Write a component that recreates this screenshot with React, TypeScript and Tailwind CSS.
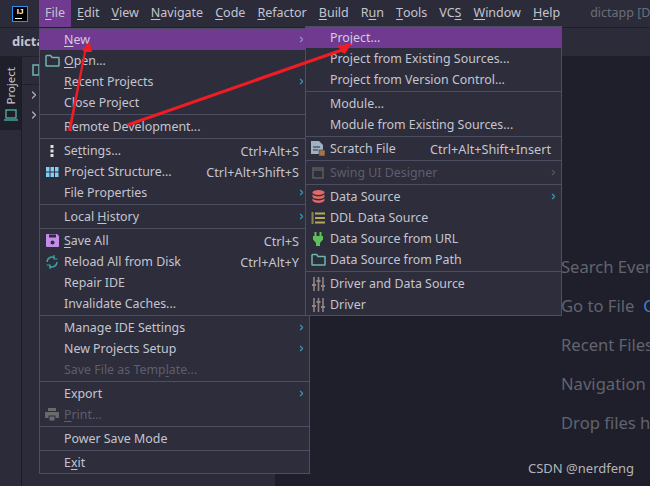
import type { ReactNode } from 'react';
import { ChevronRight } from 'lucide-react';

const font = "font-['Noto_Sans','Liberation_Sans',sans-serif]";

const topMenu: [string, string, string][] = [
  ['', 'F', 'ile'], ['', 'E', 'dit'], ['', 'V', 'iew'], ['', 'N', 'avigate'], ['', 'C', 'ode'], ['', 'R', 'efactor'],
  ['', 'B', 'uild'], ['R', 'u', 'n'], ['', 'T', 'ools'], ['VC', 'S', ''], ['', 'W', 'indow'], ['', 'H', 'elp'],
];

function FolderIcon({ color }: { color: string }) {
  return (
    <svg width="15" height="13" viewBox="0 0 15 13" fill="none" stroke={color} strokeWidth="1.5">
      <path d="M1 2.2V11.500c0 .3.2.5.5.5h12c.3 0 .5-.2.5-.5V4c0-.3-.2-.5-.5-.5H7L5.600 1.400H1.600c-.3 0-.6.3-.6.8z" />
    </svg>
  );
}

function Sliders() {
  return (
    <svg width="13" height="14" viewBox="0 0 13 14" fill="none" stroke="#8f8585" strokeWidth="1.6">
      <path d="M2 0v14M6.500 0v14M11 0v14" />
      <path d="M0 8h4M4.500 4h4M9 9h4" strokeWidth="2" />
    </svg>
  );
}

const icons: Record<string, ReactNode> = {
  folder: <FolderIcon color="#6fb5b0" />,
  folder2: <FolderIcon color="#6fb5b0" />,
  kebab: (
    <svg width="4" height="12" viewBox="0 0 4 12" fill="#e0e0e4">
      <rect x="0.500" y="0" width="3" height="3" />
      <rect x="0.500" y="4.500" width="3" height="3" />
      <rect x="0.500" y="9" width="3" height="3" />
    </svg>
  ),
  grid: (
    <svg width="13" height="10" viewBox="0 0 13 10" fill="#7fd0f5">
      <rect x="0" y="0" width="3.500" height="4.500" />
      <rect x="4.500" y="0" width="3.500" height="4.500" />
      <rect x="9" y="0" width="3.500" height="4.500" />
      <rect x="0" y="5.500" width="3.500" height="4.500" />
      <rect x="4.500" y="5.500" width="3.500" height="4.500" />
      <rect x="9" y="5.500" width="3.500" height="4.500" />
    </svg>
  ),
  save: (
    <svg width="13" height="13" viewBox="0 0 13 13">
      <path d="M0 1a1 1 0 0 1 1-1h10l2 2v10a1 1 0 0 1-1 1H1a1 1 0 0 1-1-1z" fill="#c58be8" />
      <rect x="3" y="0.500" width="7" height="3" fill="#2d2d3b" />
      <circle cx="6.500" cy="8.500" r="2" fill="#2d2d3b" />
    </svg>
  ),
  reload: (
    <svg width="12" height="14" viewBox="0 0 12 14" fill="none" stroke="#35a6a6" strokeWidth="1.6">
      <path d="M1 7a5 5 0 0 1 7.500-4.300M11 7a5 5 0 0 1-7.500 4.300" />
      <path d="M8 0v4h3.500M4 14v-4H.500" strokeWidth="1.2" />
    </svg>
  ),
  print: (
    <svg width="14" height="13" viewBox="0 0 14 13" fill="#6a6a6e">
      <rect x="3" y="0" width="8" height="3" />
      <rect x="0" y="4" width="14" height="6" rx="1" />
      <rect x="3.500" y="7.500" width="7" height="5" fill="#2d2d3b" />
      <rect x="4.500" y="8.500" width="5" height="4" />
    </svg>
  ),
  scratch: (
    <svg width="14" height="16" viewBox="0 0 14 16">
      <path d="M0 0h8l4 4v9H0z" fill="#9fb2c4" />
      <path d="M2 6h7M2 9h5" stroke="#2d2d3b" strokeWidth="1" />
      <rect x="8" y="9" width="6" height="6" fill="#a0744f" stroke="#2d2d3b" strokeWidth="0.500" />
    </svg>
  ),
  swing: (
    <svg width="12" height="12" viewBox="0 0 12 12" fill="none" stroke="#5c5c5e" strokeWidth="1.500">
      <rect x="1" y="1" width="10" height="10" />
      <path d="M1 3h10" />
    </svg>
  ),
  db: (
    <svg width="13" height="13" viewBox="0 0 13 13" fill="#e06a6a">
      <ellipse cx="6.500" cy="2.500" rx="6" ry="2.500" />
      <path d="M.500 4.200c1 1.400 3.500 2 6 2s5-.6 6-2v2.600c-.6 1.500-3.200 2.200-6 2.200s-5.400-.7-6-2.200z" />
      <path d="M.500 8.400c1 1.300 3.500 2 6 2s5-.7 6-2v2.100c-.6 1.600-3.200 2.500-6 2.500s-5.400-.9-6-2.500z" />
    </svg>
  ),
  ddl: (
    <svg width="14" height="12" viewBox="0 0 14 12" fill="#b5a95c">
      <rect x="4" y="0.500" width="10" height="2" />
      <rect x="4" y="5" width="10" height="2" />
      <rect x="4" y="9.500" width="10" height="2" />
      <rect x="0.500" y="0" width="2" height="12" fill="#8f8548" />
    </svg>
  ),
  plug: (
    <svg width="10" height="14" viewBox="0 0 10 14" fill="#5fbf5a">
      <rect x="1.500" y="0" width="2" height="4" />
      <rect x="6.500" y="0" width="2" height="4" />
      <path d="M0 4h10v3.500L7 11v3H3v-3L0 7.500z" />
    </svg>
  ),
  sliders: <Sliders />,
};

type Item = {
  label?: ReactNode;
  icon?: string;
  keys?: string;
  more?: boolean;
  off?: boolean;
  on?: boolean;
  sep?: boolean;
};

const u = (a: string, b: string, c: string) => (
  <>
    {a}
    <span className="underline underline-offset-2">{b}</span>
    {c}
  </>
);

const fileMenu: Item[] = [
  { label: u('', 'N', 'ew'), more: true, on: true },
  { label: u('', 'O', 'pen...'), icon: 'folder' },
  { label: u('', 'R', 'ecent Projects'), more: true },
  { label: 'Close Project' },
  { sep: true },
  { label: 'Remote Development...' },
  { sep: true },
  { label: u('Se', 't', 'tings...'), icon: 'kebab', keys: 'Ctrl+Alt+S' },
  { label: 'Project Structure...', icon: 'grid', keys: 'Ctrl+Alt+Shift+S' },
  { label: 'File Properties', more: true },
  { sep: true },
  { label: u('Local ', 'H', 'istory'), more: true },
  { sep: true },
  { label: u('', 'S', 'ave All'), icon: 'save', keys: 'Ctrl+S' },
  { label: 'Reload All from Disk', icon: 'reload', keys: 'Ctrl+Alt+Y' },
  { label: 'Repair IDE' },
  { label: 'Invalidate Caches...' },
  { sep: true },
  { label: 'Manage IDE Settings', more: true },
  { label: 'New Projects Setup', more: true },
  { label: u('Save File as Temp', 'l', 'ate...'), off: true },
  { sep: true },
  { label: 'Export', more: true },
  { label: u('', 'P', 'rint...'), icon: 'print', off: true },
  { sep: true },
  { label: 'Power Save Mode' },
  { sep: true },
  { label: u('E', 'x', 'it') },
];

const newMenu: Item[] = [
  { label: 'Project...', on: true },
  { label: 'Project from Existing Sources...' },
  { label: 'Project from Version Control...' },
  { sep: true },
  { label: 'Module...' },
  { label: 'Module from Existing Sources...' },
  { sep: true },
  { label: 'Scratch File', icon: 'scratch', keys: 'Ctrl+Alt+Shift+Insert' },
  { sep: true },
  { label: 'Swing UI Designer', icon: 'swing', off: true, more: true },
  { sep: true },
  { label: 'Data Source', icon: 'db', more: true },
  { label: 'DDL Data Source', icon: 'ddl' },
  { label: 'Data Source from URL', icon: 'plug' },
  { label: 'Data Source from Path', icon: 'folder2' },
  { sep: true },
  { label: 'Driver and Data Source', icon: 'sliders' },
  { label: 'Driver', icon: 'sliders' },
];

function Menu({ items, className }: { items: Item[]; className: string }) {
  return (
    <div className={`absolute border border-[#4e4e62] bg-[#2d2d3b] text-[12.4px] text-[#c4c5d0] ${className}`}>
      {items.map((item, i) =>
        item.sep ? (
          <div key={i} className="h-[3px] pt-px">
            <div className="h-px bg-[#4e4e62]" />
          </div>
        ) : (
          <div
            key={i}
            className={`flex h-[21px] items-center whitespace-nowrap ${item.on ? 'bg-[#6f3a90] text-[#d6cbe2]' : ''} ${item.off ? 'text-[#5e5e6e]' : ''}`}
          >
            <span className="flex w-[24px] shrink-0 items-center justify-center">{item.icon && icons[item.icon]}</span>
            <span className="pt-[2px]">{item.label}</span>
            {item.keys && <span className="ml-auto pl-4 pr-[10px] pt-[2px] text-[12.7px]">{item.keys}</span>}
            {item.more && (
              <ChevronRight
                size={9}
                strokeWidth={3}
                className={`ml-auto mr-[3px] ${item.off ? 'text-[#56565f]' : item.on ? 'text-[#9a8cd8]' : 'text-[#3d9ab5]'}`}
              />
            )}
          </div>
        ),
      )}
    </div>
  );
}

function Arrows() {
  return (
    <svg className="pointer-events-none absolute left-0 top-0" width="650" height="486" fill="#ee1c25">
      <polygon points="68,131 71,131 86,52 92,52 89.500,41 82,50 84,51.500" />
      <polygon points="127,123.500 128,126.500 341,52 345,54 352,43 337,46 340,49" />
    </svg>
  );
}

export default function App() {
  return (
    <div className={`relative h-[486px] w-[650px] overflow-hidden bg-[#1e1f2a] ${font}`}>
      {/* title bar */}
      <div className="flex h-[28px] items-center whitespace-nowrap border-b border-[#1f1f2a] bg-[#2b2b39] text-[12.5px] text-[#c4c5d0]">
        <div className="flex w-[39px] shrink-0 justify-center pl-px">
          <div className="flex h-[16px] w-[16px] flex-col items-center border border-[#2f8ff0] bg-black font-['Liberation_Sans'] text-[8px] font-bold leading-[10px] text-white">
            IJ
            <div className="ml-[2px] mt-px h-px w-[7px] self-start bg-white" />
          </div>
        </div>
        {topMenu.map(([a, b, c], i) => (
          <div key={i} className={`flex h-full shrink-0 items-center px-[6px] ${i === 0 ? 'bg-[#6f3a90]' : ''}`}>
            {u(a, b, c)}
          </div>
        ))}
        <div className="ml-[24px] shrink-0 text-[#6c6d7a]">dictapp [D</div>
      </div>

      {/* project bar */}
      <div className="flex h-[29px] items-center border-b border-[#20202b] bg-[#2b2b39] pl-[12px] text-[13px] font-bold text-[#c4c5d0]">
        dictapp
      </div>

      <div className="flex h-[429px]">
        <div className="w-[22px] shrink-0 border-r border-[#1b1b24] bg-[#2b2b39]">
          <div className="flex h-[73px] flex-col items-center bg-[#1e1f28] pt-[10px] text-[11.5px] text-[#c4c5d0]">
            <span className="rotate-180 leading-none [writing-mode:vertical-rl]">Project</span>
            <svg className="mt-[4px]" width="14" height="12" viewBox="0 0 14 12" fill="none" stroke="#4fb3a8" strokeWidth="1.300">
              <rect x="2" y="1" width="10" height="8" />
              <path d="M0 11h14" />
            </svg>
          </div>
        </div>

        <div className="w-[253px] shrink-0 bg-[#2b2b39]">
          <div className="flex h-[28px] items-center border-b border-[#20202b] pl-[9px]">
            <svg width="8" height="14" viewBox="0 0 8 14" fill="none" stroke="#6fb5b0" strokeWidth="1.500">
              <path d="M2 1h6v10H2z" />
            </svg>
          </div>
          <div className="flex h-[20px] items-center pl-[6px] text-[#b0b0ba]">
            <ChevronRight size={12} strokeWidth={2.500} />
          </div>
          <div className="flex h-[20px] items-center pl-[6px] text-[#b0b0ba]">
            <ChevronRight size={12} strokeWidth={2.500} />
          </div>
        </div>

        {/* welcome hints */}
        <div className="flex-1 whitespace-nowrap pl-[286px] pt-[191px] text-[16.600px] text-[#62636f]">
          <div className="flex h-[39px] items-center">Search Everywhere</div>
          <div className="flex h-[39px] items-center gap-[9px]">
            Go to File <span className="text-[#3f7fd0]">Ctrl+Shift+N</span>
          </div>
          <div className="flex h-[39px] items-center">Recent Files</div>
          <div className="flex h-[39px] items-center gap-[9px]">
            Navigation <span>Bar</span>
          </div>
          <div className="flex h-[39px] items-center">Drop files here</div>
        </div>
      </div>

      <Menu items={fileMenu} className="left-[39px] top-[28px] w-[271px]" />
      <Menu items={newMenu} className="left-[305px] top-[26px] w-[257px]" />
      <Arrows />

      <div className="absolute left-[528px] top-[459px] text-[13px] text-[#b5b5b8]">CSDN @nerdfeng</div>
    </div>
  );
}
